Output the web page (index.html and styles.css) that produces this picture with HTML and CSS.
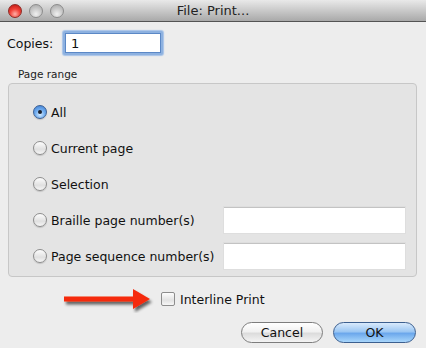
FILE: index.html
```html
<!DOCTYPE html>
<html>
<head>
<meta charset="utf-8">
<link rel="stylesheet" href="styles.css">
</head>
<body>
<div class="window">
  <div class="titlebar">
    <div class="lights">
      <span class="light red"></span>
      <span class="light gray"></span>
      <span class="light gray"></span>
    </div>
    <div class="title">File: Print...</div>
  </div>
  <div class="copies">
    <span class="label">Copies:</span>
    <div class="input focus">1</div>
  </div>
  <div class="group-label">Page range</div>
  <div class="group">
    <div class="row"><span class="radio on"></span><span class="rlabel">All</span></div>
    <div class="row"><span class="radio"></span><span class="rlabel">Current page</span></div>
    <div class="row"><span class="radio"></span><span class="rlabel">Selection</span></div>
    <div class="row"><span class="radio"></span><span class="rlabel">Braille page number(s)</span><div class="tfield"></div></div>
    <div class="row"><span class="radio"></span><span class="rlabel">Page sequence number(s)</span><div class="tfield"></div></div>
  </div>
  <div class="interline">
    <svg class="arrow" width="100" height="28" viewBox="0 0 100 28">
      <defs>
        <filter id="sh" x="-20%" y="-50%" width="140%" height="200%">
          <feGaussianBlur in="SourceAlpha" stdDeviation="1.6"/>
          <feOffset dx="2" dy="3" result="b"/>
          <feComponentTransfer><feFuncA type="linear" slope="0.6"/></feComponentTransfer>
          <feMerge><feMergeNode/><feMergeNode in="SourceGraphic"/></feMerge>
        </filter>
      </defs>
      <path d="M5 11.5 H74 V4 L91 14 L74 24 V16.5 H5 Z" fill="#f52a0c" filter="url(#sh)"/>
    </svg>
    <span class="checkbox"></span>
    <span class="clabel">Interline Print</span>
  </div>
  <div class="buttons">
    <div class="btn">Cancel</div>
    <div class="btn default">OK</div>
  </div>
</div>
</body>
</html>
```
FILE: styles.css
```css
* { box-sizing: border-box; }
html, body { margin: 0; padding: 0; }
body {
  width: 426px;
  height: 348px;
  background: #ededed;
  font-family: "DejaVu Sans", "Liberation Sans", sans-serif;
  font-size: 12px;
  color: #111;
  overflow: hidden;
}
.window { display: flex; flex-direction: column; height: 348px; }
.titlebar {
  position: relative;
  height: 22px;
  flex: none;
  background: linear-gradient(#e9e9e9, #c9c9c9 50%, #a9a9a9);
  border-bottom: 1px solid #545454;
  display: flex;
  align-items: center;
}
.lights { display: flex; gap: 7px; padding-left: 8px; }
.light {
  width: 14px; height: 14px; border-radius: 50%;
  display: block;
}
.light.red {
  background: radial-gradient(circle at 50% 75%, #ffb0a8 0, #f2443a 45%, #b8110d 100%);
  border: 1px solid #8e2b25;
}
.light.gray {
  background: radial-gradient(circle at 50% 75%, #f0f0f0 0, #c9c9c9 50%, #a4a4a4 100%);
  border: 1px solid #8c8c8c;
}
.title {
  position: absolute;
  left: 0; right: 0; top: 3px;
  text-align: center;
  font-size: 13px;
  color: #222;
}
.copies {
  display: flex;
  align-items: center;
  margin-top: 9px;
  padding-left: 7px;
  height: 24px;
}
.label { width: 56px; font-size: 12.5px; }
.input {
  width: 100px; height: 24px;
  background: #fff;
  font-size: 13px;
  padding: 3px 0 0 6px;
}
.input.focus {
  border: 2px solid #8db1e0;
  box-shadow: inset 0 0 0 1px #5b88c6, 0 0 1px 1px #a7c3e8;
  border-radius: 2px;
}
.group-label {
  margin: 12px 0 0 18px;
  font-size: 10.5px;
  height: 16px;
  line-height: 14px;
  color: #222;
}
.group {
  margin: 0 9px 0 8px;
  height: 194px;
  background: #e4e4e4;
  border: 1px solid #c7c7c7;
  border-radius: 4px;
  padding: 15px 11px 0 24px;
  display: flex;
  flex-direction: column;
  gap: 10px;
}
.row {
  height: 26px;
  display: flex;
  align-items: center;
}
.radio {
  width: 14px; height: 14px;
  border-radius: 50%;
  border: 1px solid #8d8d8d;
  background: linear-gradient(#fdfdfd, #e0e0e0 60%, #f6f6f6);
  box-shadow: 0 1px 1px rgba(0,0,0,0.15);
  flex: none;
  position: relative;
}
.radio.on {
  border-color: #3b5f93;
  background: radial-gradient(circle at 50% 70%, #d6ecff 0, #72aef0 45%, #3a7ad0 100%);
}
.radio.on::after {
  content: "";
  position: absolute;
  left: 4px; top: 4px;
  width: 4px; height: 4px;
  border-radius: 50%;
  background: #1a2230;
}
.rlabel { margin-left: 4px; font-size: 12.5px; }
.tfield {
  margin-left: auto;
  width: 181px; height: 26px;
  background: #fff;
  border-top: 1px solid #c3c3c3;
  box-shadow: 0 0 0 1px #dedede;
}
.interline {
  display: flex;
  align-items: center;
  height: 28px;
  margin-top: 8px;
  padding-left: 59px;
}
.arrow { flex: none; display: block; }
.checkbox {
  margin-left: 2px;
  width: 14px; height: 14px;
  border: 1px solid #8d8d8d;
  border-radius: 2px;
  background: linear-gradient(#fdfdfd, #e2e2e2 60%, #f6f6f6);
  flex: none;
}
.clabel { margin-left: 5px; font-size: 12.5px; }
.buttons {
  display: flex;
  justify-content: flex-end;
  gap: 10px;
  padding-right: 10px;
  margin-top: 9px;
}
.btn {
  width: 82px; height: 21px;
  border-radius: 11px;
  border: 1px solid #7d7d7d;
  background: linear-gradient(#ffffff, #f1f1f1 45%, #dcdcdc 55%, #f4f4f4);
  text-align: center;
  font-size: 12.5px;
  line-height: 19px;
  color: #111;
}
.btn.default {
  width: 83px;
  border-color: #3c5f8f;
  background: linear-gradient(#d9eafc, #9cc7f3 45%, #6ca8ec 55%, #a8d6fb);
}
```
